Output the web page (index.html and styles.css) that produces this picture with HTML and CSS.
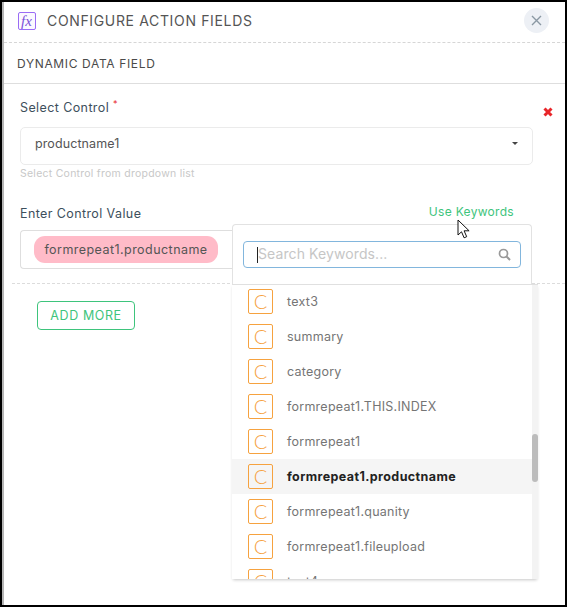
FILE: index.html
```html
<!DOCTYPE html>
<html lang="en">
<head>
    <meta charset="UTF-8">
    <title>Configure Action Fields</title>
    <link rel="stylesheet" href="styles.css">
</head>
<body>
    <div class="dialog">
        <header class="dialog-header">
            <svg class="fx-icon" width="18" height="18" viewBox="0 0 18 18">
                <rect x="0.5" y="0.5" width="17" height="17" rx="1.5" fill="#fbf9ff" stroke="#9a6cf5"/>
                <text x="3" y="13.500" class="fx-text">fx</text>
            </svg>
            <h2>CONFIGURE ACTION FIELDS</h2>
            <button class="close-btn" type="button">
                <svg width="11" height="11" viewBox="0 0 11 11"><path d="M1 1l9 9M10 1l-9 9" stroke="#8a98a3" stroke-width="1.4" fill="none"/></svg>
            </button>
        </header>

        <div class="section-title">DYNAMIC DATA FIELD</div>

        <div class="form-block">
            <div class="field-select">
                <label class="field-label">Select Control <sup class="req">*</sup></label>
                <div class="select-box">
                    <span>productname1</span>
                    <span class="caret"></span>
                </div>
                <p class="hint">Select Control from dropdown list</p>
            </div>

            <div class="value-head">
                <label class="field-label">Enter Control Value</label>
                <a class="use-keywords">Use Keywords</a>
            </div>
            <div class="value-box">
                <span class="chip">formrepeat1.productname</span>
            </div>
        </div>

        <div class="actions">
            <button class="add-more" type="button">ADD MORE</button>
        </div>

        <!-- remove row -->
        <svg class="remove-row" width="10" height="10" viewBox="0 0 10 10"><path d="M1.5 1.5l7 7M8.500 1.500l-7 7" stroke="#e8262a" stroke-width="3" fill="none"/></svg>

        <!-- keywords popup -->
        <div class="keyword-pop">
            <div class="search-wrap">
                <div class="search-box">
                    <span class="text-cursor"></span>
                    <span class="search-ph">Search Keywords...</span>
                    <svg width="13" height="13" viewBox="0 0 13 13"><circle cx="5.500" cy="5.500" r="4" stroke="#999" stroke-width="1.700" fill="none"/><path d="M8.500 8.500l3.500 3.500" stroke="#999" stroke-width="2" fill="none"/></svg>
                </div>
            </div>
            <div class="list-wrap">
                <ul class="keyword-list">
                    <li><span class="c-icon">C</span>text3</li>
                    <li><span class="c-icon">C</span>summary</li>
                    <li><span class="c-icon">C</span>category</li>
                    <li><span class="c-icon">C</span>formrepeat1.THIS.INDEX</li>
                    <li><span class="c-icon">C</span>formrepeat1</li>
                    <li class="active"><span class="c-icon">C</span>formrepeat1.productname</li>
                    <li><span class="c-icon">C</span>formrepeat1.quanity</li>
                    <li><span class="c-icon">C</span>formrepeat1.fileupload</li>
                    <li><span class="c-icon">C</span>text4</li>
                </ul>
                <div class="scrollbar"><div class="thumb"></div></div>
            </div>
        </div>

        <svg class="pointer" width="14" height="21" viewBox="0 0 14 21">
            <path d="M1 1v15l3.500-3.200 2.600 6 2.600-1.100-2.600-5.900h5z" fill="#fff" stroke="#111" stroke-width="1"/>
        </svg>
    </div>
</body>
</html>
```

FILE: styles.css
```css
* {
    box-sizing: border-box;
}

html, body {
    margin: 0;
    padding: 0;
}

body {
    width: 567px;
    height: 607px;
    background: #000;
    padding: 2px;
    font-family: 'Inter', 'Liberation Sans', sans-serif;
    overflow: hidden;
}

.dialog {
    position: relative;
    width: 563px;
    height: 603px;
    background: #fff;
    border-left: 2px solid #b5b5b5;
    display: flex;
    flex-direction: column;
}

.dialog-header {
    height: 41px;
    flex: none;
    display: flex;
    align-items: center;
    padding: 0 4px 3px 14px;
    border-bottom: 1px dashed #d6d6d6;
}

.fx-icon {
    flex: none;
    margin-right: 11px;
}

.fx-text {
    font-family: 'Liberation Serif', serif;
    font-style: italic;
    font-size: 15px;
    fill: #7a4fd8;
}

.dialog-header h2 {
    margin: 0;
    font-size: 14px;
    font-weight: 400;
    color: #555;
    flex: 1;
    letter-spacing: 0.65px;
}

.close-btn {
    width: 25px;
    height: 25px;
    border: none;
    border-radius: 50%;
    background: #edf0f5;
    padding: 0;
    margin-right: 12px;
    display: flex;
    align-items: center;
    justify-content: center;
}

.section-title {
    height: 41px;
    flex: none;
    display: flex;
    align-items: center;
    padding-left: 13px;
    font-size: 12px;
    color: #4a4a4a;
    border-bottom: 1px solid #dedede;
    letter-spacing: 0.65px;
}

.form-block {
    padding: 0 32px 0 16px;
    flex: none;
}

.field-label {
    display: block;
    font-size: 12.500px;
    color: #3d4f5c;
    line-height: 16px;
    letter-spacing: 0.4px;
}

.req {
    color: #e8262a;
    font-size: 9px;
    line-height: 0;
}

.field-select {
    padding-top: 16px;
}

.select-box {
    margin-top: 11px;
    height: 38px;
    border: 1px solid #ebebeb;
    border-radius: 5px;
    padding: 0 14px 6px;
    display: flex;
    align-items: center;
    justify-content: space-between;
    font-size: 12.500px;
    color: #555;
    letter-spacing: 0.1px;
}

.caret {
    width: 0;
    height: 0;
    border-left: 3px solid transparent;
    border-right: 3px solid transparent;
    border-top: 3px solid #444;
}

.hint {
    margin: 2px 0 0;
    font-size: 10.500px;
    line-height: 14px;
    color: #c8c8c8;
    letter-spacing: 0.25px;
}

.value-head {
    margin-top: 25px;
    display: flex;
    justify-content: space-between;
    align-items: flex-start;
}

.use-keywords {
    font-size: 12px;
    line-height: 15px;
    color: #3ec47c;
    margin-top: -2px;
    margin-right: 19px;
    letter-spacing: 0.3px;
}

.value-box {
    margin-top: 8px;
    height: 39px;
    width: 240px;
    border: 1px solid #dedede;
    border-right: none;
    border-radius: 4px 0 0 4px;
    padding-left: 13px;
    display: flex;
    align-items: center;
}

.chip {
    width: 184px;
    height: 27px;
    border-radius: 11px;
    background: #ffbbc8;
    color: #555;
    font-size: 12.500px;
    letter-spacing: 0.45px;
    display: flex;
    align-items: center;
    justify-content: center;
}

.actions {
    margin: 14px 0 0 8px;
    padding: 17px 0 0 25px;
    border-top: 1px dashed #dcdcdc;
}

.add-more {
    width: 98px;
    height: 29px;
    background: #fff;
    border: 1px solid #3ec47c;
    border-radius: 4px;
    color: #3ec47c;
    font-family: inherit;
    font-size: 12.500px;
    letter-spacing: 0.6px;
    padding: 0;
}

.remove-row {
    position: absolute;
    left: 539px;
    top: 105px;
}

.keyword-pop {
    position: absolute;
    left: 228px;
    top: 222px;
    width: 300px;
    height: 355px;
    background: #fff;
    border: 1px solid #e2e2e2;
    border-bottom: none;
    border-radius: 4px 4px 0 0;
}

.search-wrap {
    height: 59px;
    padding: 16px 10px 0;
}

.search-box {
    height: 27px;
    border: 1px solid #82b6dd;
    border-radius: 4px;
    display: flex;
    align-items: center;
    padding: 0 9px 0 13px;
}

.text-cursor {
    width: 1px;
    height: 16px;
    background: #222;
    flex: none;
}

.search-ph {
    flex: 1;
    font-size: 14px;
    color: #c6c6c6;
    letter-spacing: 0.1px;
    padding-bottom: 2px;
}

.list-wrap {
    position: relative;
    width: 306px;
    height: 295px;
    margin-left: -1px;
    border-top: 1px solid #e0e0e0;
    overflow: hidden;
    background: #fff;
    box-shadow: 0 2px 3px -1px rgba(0, 0, 0, 0.22);
}

.keyword-list {
    list-style: none;
    margin: -1px 0 0;
    padding: 0;
    width: 300px;
}

.keyword-list li {
    height: 35px;
    display: flex;
    align-items: center;
    padding-left: 16px;
    font-size: 12.500px;
    color: #757575;
    letter-spacing: 0.25px;
}

.keyword-list li.active {
    background: #f5f5f5;
    color: #222;
    font-weight: 700;
    letter-spacing: 0.4px;
}

.c-icon {
    width: 25px;
    height: 25px;
    flex: none;
    margin-right: 14px;
    border: 1px solid #f6a23f;
    border-radius: 2px;
    color: #f6a23f;
    font-family: 'Lato', 'Liberation Sans', sans-serif;
    font-size: 20px;
    font-weight: 300;
    line-height: 22px;
    letter-spacing: 0;
    text-align: center;
}

.scrollbar {
    position: absolute;
    top: 0;
    right: 0;
    width: 6px;
    height: 100%;
    background: #f3f3f3;
}

.thumb {
    margin-top: 149px;
    height: 48px;
    background: #bcbcbc;
    border-radius: 3px;
}

.pointer {
    position: absolute;
    left: 453px;
    top: 217px;
}
```
